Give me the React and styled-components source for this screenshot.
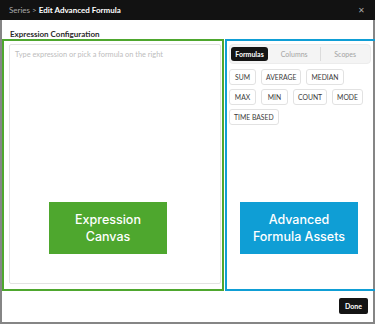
import React from 'react';
import styled, { createGlobalStyle } from 'styled-components';

const GlobalStyle = createGlobalStyle`
  html, body {
    margin: 0;
    padding: 0;
    background: #ffffff;
  }
  * {
    box-sizing: border-box;
  }
`;

const Dialog = styled.div`
  display: flex;
  flex-direction: column;
  width: 375px;
  height: 324px;
  border: 2px solid #858585;
  border-top: none;
  background: #ffffff;
  font-family: Lato, 'Liberation Sans', sans-serif;
`;

const Header = styled.div`
  display: flex;
  align-items: center;
  justify-content: space-between;
  height: 20px;
  margin: 0 -2px;
  padding: 0 10px 0 9px;
  background: #121212;
  font-size: 8px;
`;

const Crumb = styled.span`
  color: #a9a9a9;
`;

const HeaderTitle = styled.span`
  color: #ffffff;
  font-weight: 700;
`;

const Close = styled.span`
  color: #a8a8a8;
  font-size: 8px;
  font-weight: 300;
  line-height: 1;
`;

const SectionTitle = styled.div`
  height: 19px;
  padding: 9px 0 0 8px;
  color: #2a2a2a;
  font-size: 8px;
  font-weight: 700;
  line-height: 10px;
`;

const Panels = styled.div`
  display: flex;
  gap: 1px;
  height: 252px;
`;

const Panel = styled.div`
  position: relative;
  flex: ${(p) => p.grow};
  border: 2px solid ${(p) => p.color};
  padding: ${(p) => p.pad};
`;

const Canvas = styled.div`
  height: 100%;
  padding: 5px 5px;
  border: 1px solid #e3e3e3;
  border-radius: 2px;
  color: #bdbdbd;
  font-size: 7.4px;
`;

const Tabs = styled.div`
  display: flex;
  align-items: center;
  height: 20px;
  padding: 0 1px;
  border: 1px solid #ececec;
  border-radius: 4px;
  background: #f4f4f4;
`;

const Tab = styled.div`
  display: flex;
  align-items: center;
  justify-content: center;
  height: 14px;
  flex: ${(p) => p.grow};
  border-left: ${(p) => (p.divider ? '1px solid #dcdcdc' : 'none')};
  border-radius: ${(p) => (p.active ? '3px' : '0')};
  background: ${(p) => (p.active ? '#141414' : 'transparent')};
  color: ${(p) => (p.active ? '#ffffff' : '#a3a3a3')};
  font-size: 7px;
  font-weight: ${(p) => (p.active ? 700 : 400)};
`;

const Chips = styled.div`
  display: flex;
  flex-wrap: wrap;
  gap: 4px 5px;
  margin-top: 5px;
  width: 142px;
`;

const Chip = styled.div`
  display: flex;
  align-items: center;
  justify-content: center;
  height: 16px;
  min-width: 27px;
  padding: 0 4px;
  border: 1px solid #e2e2e2;
  border-radius: 3px;
  background: #ffffff;
  color: #3a3a3a;
  font-size: 6.8px;
`;

const Label = styled.div`
  position: absolute;
  top: 161px;
  left: ${(p) => p.left}px;
  display: flex;
  align-items: center;
  justify-content: center;
  width: 118px;
  height: 52px;
  background: ${(p) => p.color};
  color: #ffffff;
  font-family: Inter, Roboto, sans-serif;
  font-size: 12.5px;
  font-weight: 500;
  line-height: 17px;
  text-align: center;
`;

const Footer = styled.div`
  display: flex;
  flex: 1;
  align-items: center;
  justify-content: flex-end;
  padding: 0 5px 1px 0;
`;

const Button = styled.button`
  width: 29px;
  height: 16px;
  padding: 0;
  border: none;
  border-radius: 2px;
  background: #141414;
  color: #ffffff;
  font-family: Lato, 'Liberation Sans', sans-serif;
  font-size: 7px;
  font-weight: 700;
`;

const formulas = ['SUM', 'AVERAGE', 'MEDIAN', 'MAX', 'MIN', 'COUNT', 'MODE', 'TIME BASED'];

const App = () => (
  <>
    <GlobalStyle />
    <Dialog>
      <Header>
        <span>
          <Crumb>Series &gt; </Crumb>
          <HeaderTitle>Edit Advanced Formula</HeaderTitle>
        </span>
        <Close>✕</Close>
      </Header>
      <SectionTitle>Expression Configuration</SectionTitle>
      <Panels>
        <Panel grow="0 0 222px" color="#4ea72e" pad="3px 1px 5px 5px">
          <Canvas>Type expression or pick a formula on the right</Canvas>
          <Label left={45} color="#4ea72e">
            Expression
            <br />
            Canvas
          </Label>
        </Panel>
        <Panel grow="1" color="#0f9ed5" pad="3px 4px 3px 2px">
          <Tabs>
            <Tab active grow="0 0 37px">Formulas</Tab>
            <Tab grow="1.1">Columns</Tab>
            <Tab divider grow="1">Scopes</Tab>
          </Tabs>
          <Chips>
            {formulas.map((name) => (
              <Chip key={name}>{name}</Chip>
            ))}
          </Chips>
          <Label left={13} color="#0f9ed5">
            Advanced
            <br />
            Formula Assets
          </Label>
        </Panel>
      </Panels>
      <Footer>
        <Button>Done</Button>
      </Footer>
    </Dialog>
  </>
);

export default App;
